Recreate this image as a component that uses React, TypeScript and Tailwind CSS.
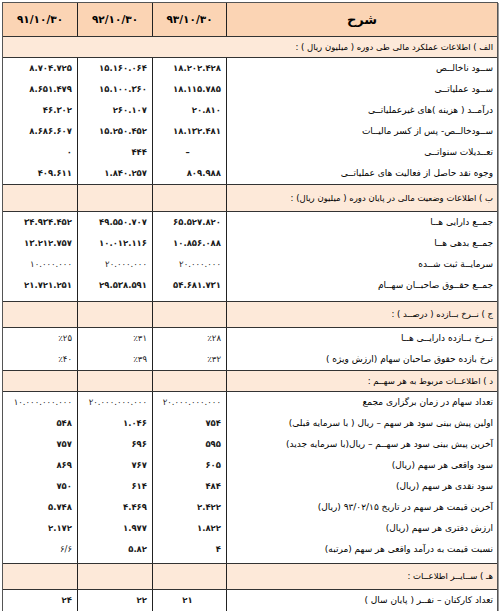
import React from "react";

const FA = "۰۱۲۳۴۵۶۷۸۹";
const fa = (s: string) => s.replace(/[0-9]/g, (d) => FA[Number(d)]);

type Cell = { v: string; cls?: string; center?: boolean };
type Row = { label: string; vals: (string | Cell)[] };

const cols = "grid grid-cols-[75px_75px_74px_1fr]";

const groupA: Row[] = [
  { label: "ســود ناخالــص", vals: ["8.704.725", "15.160.064", "18.202.428"] },
  { label: "ســود عملیاتــی", vals: ["8.651.479", "15.100.360", "18.115.785"] },
  { label: "درآمــد ( هزینه )های غیرعملیاتــی", vals: ["46.302", "260.107", "20.810"] },
  { label: "ســودخالــص- پس از کسر مالیــات", vals: ["8.686.607", "15.250.452", "18.132.481"] },
  { label: "تعــدیلات سنواتــی", vals: ["0", "444", { v: "–", center: true }] },
  { label: "وجوه نقد حاصل از فعالیت های عملیاتــی", vals: ["409.611", "1.840.257", "809.988"] },
];

const small = "text-[6.5px] font-normal";
const tiny = "text-[5px] font-normal tracking-[-0.4px]";

const groupB: Row[] = [
  { label: "جمــع دارایی هــا", vals: ["34.934.452", "49.550.707", "65.527.820"] },
  { label: "جمــع بدهی هــا", vals: ["13.212.757", "10.012.116", "10.856.088"] },
  {
    label: "سرمایــة ثبت شــده",
    vals: [
      { v: "10.000.000", cls: small },
      { v: "20.000.000", cls: small },
      { v: "20.000.000", cls: small },
    ],
  },
  { label: "جمــع حقــوق صاحبــان سهــام", vals: ["21.721.251", "29.538.591", "54.681.731"] },
];

const groupC: Row[] = [
  { label: "نــرخ بــازده دارایــی هــا", vals: ["٪25", "٪31", "٪28"].map((v) => ({ v, cls: "font-normal" })) },
  {
    label: "نرخ بازده حقوق صاحبان سهام (ارزش ویژه )",
    vals: ["٪40", "٪39", "٪32"].map((v) => ({ v, cls: "font-normal" })),
  },
];

const groupD: Row[] = [
  {
    label: "تعداد سهام در زمان برگزاری مجمع",
    vals: [
      { v: "10.000.000.000", cls: tiny },
      { v: "20.000.000.000", cls: tiny },
      { v: "20.000.000.000", cls: tiny },
    ],
  },
  { label: "اولین پیش بینی سود هر سهم – ریال ( با سرمایه قبلی)", vals: ["548", "1.046", "754"] },
  { label: "آخرین پیش بینی سود هر سهــم – ریال(با سرمایه جدید)", vals: ["757", "696", "595"] },
  { label: "سود واقعی هر سهم  (ریال)", vals: ["869", "767", "605"] },
  { label: "سود نقدی هر سهم  (ریال)", vals: ["750", "614", "484"] },
  { label: "آخرین قیمت هر سهم در تاریخ 93/02/15  (ریال)", vals: ["5.748", "4.469", "2.422"] },
  { label: "ارزش دفتری هر سهم (ریال)", vals: ["2.172", "1.977", "1.822"] },
  { label: "نسبت قیمت به درآمد واقعی هر سهم (مرتبه)", vals: [{ v: "6/6", cls: "font-normal" }, "5.82", "4"] },
];

const groupE: Row[] = [
  { label: "تعداد کارکنان – نفــر ( پایان سال )", vals: ["24", "22", { v: "21", center: true }] },
];

function Body({ rows, pb }: { rows: Row[]; pb: string }) {
  return (
    <div className={`${cols} border-b border-[#333]`}>
      {[0, 1, 2].map((ci) => (
        <div key={ci} className={`flex flex-col border-r border-[#222] ${pb}`}>
          {rows.map((r, ri) => {
            const raw = r.vals[ci];
            const c: Cell = typeof raw === "string" ? { v: raw } : raw;
            return (
              <div
                key={ri}
                className={`flex h-[21px] items-center ${c.center ? "justify-center pr-[4px]" : "justify-end pr-[5px]"}`}
              >
                <span className={`text-[8.5px] font-bold text-[#1a1a1a] ${c.cls ?? ""}`}>{fa(c.v)}</span>
              </div>
            );
          })}
        </div>
      ))}
      <div dir="rtl" className={`flex flex-col ${pb}`}>
        {rows.map((r, ri) => (
          <div key={ri} className="flex h-[21px] items-center pr-[4px] text-[9px] text-black">
            {fa(r.label)}
          </div>
        ))}
      </div>
    </div>
  );
}

function Section({ label, h, span }: { label: string; h: string; span?: boolean }) {
  if (span) {
    return (
      <div dir="rtl" className={`flex ${h} items-center border-b border-[#333] bg-[#fde9d9] pr-[4px] text-[8.5px] text-black`}>
        {label}
      </div>
    );
  }
  return (
    <div className={`${cols} ${h} border-b border-[#333] bg-[#fde9d9]`}>
      <div className="border-r border-[#222]" />
      <div className="border-r border-[#222]" />
      <div className="border-r border-[#222]" />
      <div dir="rtl" className="flex items-center pr-[4px] text-[8.5px] text-black">
        {label}
      </div>
    </div>
  );
}

export default function App() {
  return (
    <div className="h-[611px] w-[500px] bg-white pl-[2px] pt-[2px] font-['DejaVu_Sans',sans-serif]">
      <div className="w-[496px] border border-[#555] shadow-[1px_1px_0_#9a9a9a]">
        <div className={`${cols} h-[34px] border-b border-[#333] bg-[#fbd4b4]`}>
          {["91/10/30", "92/10/30", "93/10/30"].map((d) => (
            <div key={d} className="flex items-center justify-center border-r border-[#222] text-[10.5px] font-bold text-black">
              {fa(d)}
            </div>
          ))}
          <div className="flex items-center justify-center text-[13px] font-bold text-black">شرح</div>
        </div>
        <Section span h="h-[21px]" label="الف ) اطلاعات عملکرد مالی طی دوره ( میلیون ریال ) :" />
        <Body rows={groupA} pb="pb-0" />
        <Section h="h-[27px]" label="ب ) اطلاعات وضعیت مالی در پایان دوره ( میلیون ریال) :" />
        <Body rows={groupB} pb="pb-[5px]" />
        <Section h="h-[26px]" label="ج ) نــرخ بــازده ( درصــد ) :" />
        <Body rows={groupC} pb="pb-0" />
        <Section h="h-[21px]" label="د ) اطلاعــات مربوط به هر سهــم :" />
        <Body rows={groupD} pb="pb-[3px]" />
        <Section h="h-[26px]" label="هـ ) ســایــر اطلاعــات :" />
        <Body rows={groupE} pb="pb-0" />
      </div>
    </div>
  );
}
